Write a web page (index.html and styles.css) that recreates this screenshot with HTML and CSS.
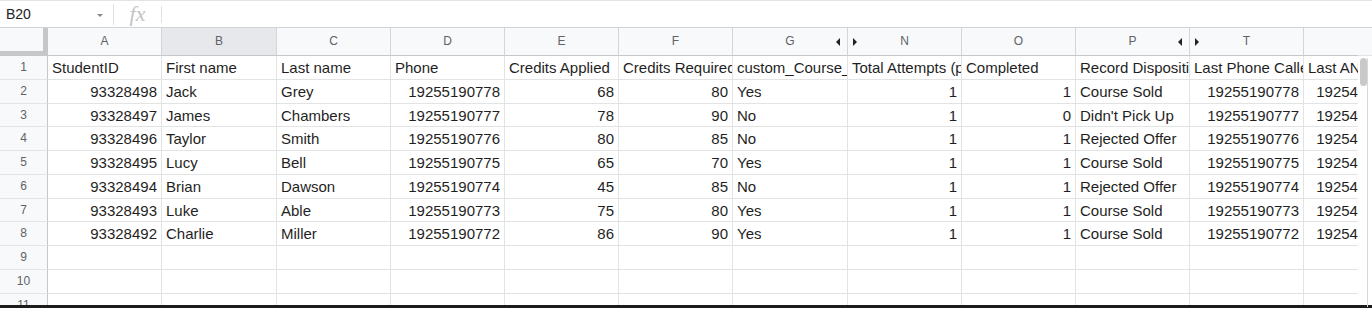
FILE: index.html
```html
<!DOCTYPE html>
<html lang="en">
<head>
  <meta charset="UTF-8">
  <title>Student Calls</title>
  <link rel="stylesheet" href="styles.css">
</head>
<body>
  <div class="formula-bar">
    <div class="name-box">
      <span class="cell-ref">B20</span>
      <span class="caret"></span>
    </div>
    <div class="fx">fx</div>
    <div class="formula-input"></div>
  </div>

  <div class="sheet">
    <div class="grid-view" id="grid"></div>
    <div class="scrollbar">
      <div class="scroll-head"></div>
      <div class="track"><div class="thumb"></div></div>
    </div>
  </div>
  <div class="window-edge"></div>

  <script>
    const columns = [
      { letter: 'A' },
      { letter: 'B', selected: true },
      { letter: 'C' },
      { letter: 'D' },
      { letter: 'E' },
      { letter: 'F' },
      { letter: 'G', hidden: 'after' },
      { letter: 'N', hidden: 'before' },
      { letter: 'O' },
      { letter: 'P', hidden: 'after' },
      { letter: 'T', hidden: 'before' },
      { letter: '' }
    ];

    const rows = [
      ['StudentID', 'First name', 'Last name', 'Phone', 'Credits Applied', 'Credits Required', 'custom_Course_Name', 'Total Attempts (phone)', 'Completed', 'Record Disposition', 'Last Phone Called', 'Last ANI'],
      ['93328498', 'Jack', 'Grey', '19255190778', '68', '80', 'Yes', '1', '1', 'Course Sold', '19255190778', '19254190778'],
      ['93328497', 'James', 'Chambers', '19255190777', '78', '90', 'No', '1', '0', "Didn't Pick Up", '19255190777', '19254190777'],
      ['93328496', 'Taylor', 'Smith', '19255190776', '80', '85', 'No', '1', '1', 'Rejected Offer', '19255190776', '19254190776'],
      ['93328495', 'Lucy', 'Bell', '19255190775', '65', '70', 'Yes', '1', '1', 'Course Sold', '19255190775', '19254190775'],
      ['93328494', 'Brian', 'Dawson', '19255190774', '45', '85', 'No', '1', '1', 'Rejected Offer', '19255190774', '19254190774'],
      ['93328493', 'Luke', 'Able', '19255190773', '75', '80', 'Yes', '1', '1', 'Course Sold', '19255190773', '19254190773'],
      ['93328492', 'Charlie', 'Miller', '19255190772', '86', '90', 'Yes', '1', '1', 'Course Sold', '19255190772', '19254190772']
    ];

    const numberCols = [0, 3, 4, 5, 7, 8, 10, 11];
    const totalRows = 11;
    const grid = document.getElementById('grid');

    function renderHeader() {
      const head = document.createElement('div');
      head.className = 'row head';

      const corner = document.createElement('div');
      corner.className = 'corner';
      head.appendChild(corner);

      columns.forEach((col) => {
        const cell = document.createElement('div');
        cell.className = 'col-h';
        if (col.selected) cell.classList.add('selected');
        if (col.hidden) cell.classList.add('hidden-' + col.hidden);
        cell.textContent = col.letter;
        head.appendChild(cell);
      });

      grid.appendChild(head);
    }

    function renderRows() {
      for (let r = 0; r < totalRows; r++) {
        const row = document.createElement('div');
        row.className = 'row';

        const label = document.createElement('div');
        label.className = 'row-h';
        label.textContent = r + 1;
        row.appendChild(label);

        const values = rows[r] || [];
        columns.forEach((col, c) => {
          const cell = document.createElement('div');
          cell.className = 'cell';
          if (r > 0 && numberCols.includes(c)) cell.classList.add('num');
          cell.textContent = values[c] || '';
          row.appendChild(cell);
        });

        grid.appendChild(row);
      }
    }

    renderHeader();
    renderRows();
  </script>
</body>
</html>
```

FILE: styles.css
```css
body {
  margin: 0;
  font-family: 'Liberation Sans', Arial, sans-serif;
  color: #222222;
  background: #ffffff;
  overflow: hidden;
}

/* formula bar */

.formula-bar {
  display: flex;
  align-items: center;
  height: 27px;
  box-sizing: border-box;
  border-top: 1px solid #e3e3e3;
}

.name-box {
  display: flex;
  align-items: center;
  justify-content: space-between;
  width: 114px;
  height: 21px;
  box-sizing: border-box;
  padding: 0 10px 0 6px;
  border-right: 1px solid #e0e0e0;
}

.cell-ref {
  font-size: 14px;
  color: #222222;
}

.caret {
  width: 0;
  height: 0;
  border-left: 3px solid transparent;
  border-right: 3px solid transparent;
  border-top: 3px solid #8a8a8a;
  margin-top: 2px;
}

.fx {
  width: 48px;
  height: 17px;
  box-sizing: border-box;
  border-right: 1px solid #e0e0e0;
  text-align: center;
  font-family: 'Liberation Serif', serif;
  font-style: italic;
  font-size: 22px;
  line-height: 15px;
  color: #c4c4c4;
}

.formula-input {
  flex: 1;
}

/* sheet grid */

.sheet {
  display: flex;
  height: 278px;
  border-top: 1px solid #d3d3d3;
  box-sizing: border-box;
}

.grid-view {
  width: 1358px;
  overflow: hidden;
}

.row {
  display: grid;
  grid-template-columns: 48px 114px 115px 114px 114px 114px 114px 115px 114px 114px 114px 114px 109px;
  height: 23.75px;
}

.row.head {
  height: 28px;
}

.corner {
  background: #f8f9fa;
  border-right: 5px solid #c6c7c8;
  border-bottom: 5px solid #c6c7c8;
}

.col-h {
  position: relative;
  background: #f8f9fa;
  border-right: 1px solid #d4d5d6;
  border-bottom: 1px solid #c6c7c8;
  color: #5f6368;
  font-size: 12px;
  line-height: 27px;
  text-align: center;
}

.col-h.selected {
  background: #e6e8eb;
}

.hidden-after::after {
  content: '';
  position: absolute;
  right: 7px;
  top: 10px;
  border-top: 4px solid transparent;
  border-bottom: 4px solid transparent;
  border-right: 4px solid #222222;
}

.hidden-before::before {
  content: '';
  position: absolute;
  left: 5px;
  top: 10px;
  border-top: 4px solid transparent;
  border-bottom: 4px solid transparent;
  border-left: 4px solid #222222;
}

.row-h {
  background: #f8f9fa;
  border-right: 1px solid #c6c7c8;
  border-bottom: 1px solid #e2e3e3;
  color: #5f6368;
  font-size: 12px;
  line-height: 22.75px;
  text-align: center;
}

.cell {
  border-right: 1px solid #e2e3e3;
  border-bottom: 1px solid #e2e3e3;
  padding: 2px 4px 0;
  font-size: 15px;
  line-height: 20.75px;
  white-space: nowrap;
  overflow: hidden;
  color: #1f1f1f;
}

.cell.num {
  text-align: right;
}

/* scrollbar */

.scrollbar {
  flex: 1;
}

.scroll-head {
  height: 28px;
  background: #f8f9fa;
  border-bottom: 1px solid #e2e3e3;
  box-sizing: border-box;
}

.track {
  width: 10px;
  height: 249px;
  box-sizing: border-box;
  border-right: 1px solid #d8d8d8;
}

.thumb {
  width: 7px;
  height: 28px;
  margin: 2px 0 0 2px;
  border-radius: 4px;
  background: #c9c9c9;
}

.window-edge {
  height: 3px;
  background: #1b1b1b;
}
```
